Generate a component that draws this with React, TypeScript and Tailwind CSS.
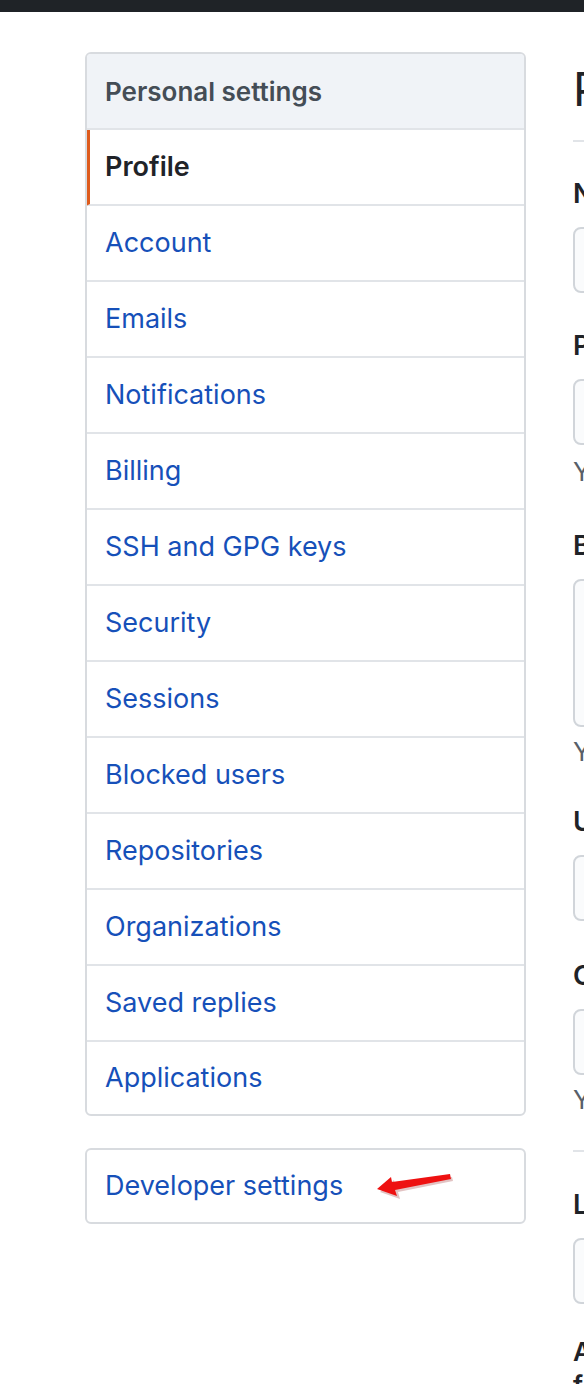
const items = [
  "Account",
  "Emails",
  "Notifications",
  "Billing",
  "SSH and GPG keys",
  "Security",
  "Sessions",
  "Blocked users",
  "Repositories",
  "Organizations",
  "Saved replies",
  "Applications",
];

function Arrow() {
  return (
    <svg
      className="absolute left-[282px] top-[14px]"
      width="90"
      height="40"
      viewBox="0 0 90 40"
    >
      <polygon
        points="10,26 24,14 25,19 82,11 83,15 28,26 30,33"
        fill="#8a1010"
        opacity="0.25"
        transform="translate(1,2)"
      />
      <polygon points="8,25 22,13 23,18 81,10 82,15 26,26 28,32" fill="#ee1111" />
    </svg>
  );
}

function Sidebar() {
  return (
    <div className="w-[441px] shrink-0">
      <nav className="rounded-[6px] border-2 border-[#d8dbdf] overflow-hidden">
        <div className="h-[76px] flex items-center pl-[18px] bg-[#f0f3f7] border-b-2 border-[#e1e4e8] text-[26px] font-semibold text-[#444d56]">
          Personal settings
        </div>
        <div className="h-[76px] flex items-center -ml-px pl-[15px] border-l-4 border-[#de5b1c] border-b-2 border-b-[#e1e4e8] text-[27px] font-semibold text-[#1f2328]">
          Profile
        </div>
        {items.map((it, i) => (
          <div
            key={it}
            className={`flex items-center pl-[18px] text-[27px] text-[#1650b9] ${
              i < items.length - 1 ? "h-[76px] border-b-2 border-[#e1e4e8]" : "h-[72px]"
            }`}
          >
            {it}
          </div>
        ))}
      </nav>
      <div className="relative mt-[32px] h-[76px] rounded-[6px] border-2 border-[#d8dbdf] flex items-center pl-[18px] text-[27px] text-[#1650b9]">
        Developer settings
        <Arrow />
      </div>
    </div>
  );
}

function Input({ h = "h-[66px]" }: { h?: string }) {
  return <div className={`${h} w-[640px] rounded-[8px] border-2 border-[#d1d5da] bg-[#fafbfc]`} />;
}

function Label({ children, mt }: { children: string; mt: string }) {
  return (
    <div className={`${mt} h-[34px] leading-[34px] text-[27px] font-semibold text-[#1f2328] mb-[16px]`}>
      {children}
    </div>
  );
}

function Note({ children, mt }: { children: string; mt: string }) {
  return (
    <div className={`${mt} h-[28px] leading-[28px] text-[26px] text-[#586069] whitespace-nowrap`}>
      {children}
    </div>
  );
}

function Main() {
  return (
    <div className="w-[700px] shrink-0 pt-[13px]">
      <h2 className="h-[48px] leading-[48px] text-[46px] text-[#1f2328] whitespace-nowrap">Public profile</h2>
      <div className="mt-[27px] border-t-2 border-[#e1e4e8]" />
      <Label mt="mt-[35px]">Name</Label>
      <Input />
      <Label mt="mt-[36px]">Public email</Label>
      <Input />
      <Note mt="mt-[13px]">You can manage verified email addresses in your email settings.</Note>
      <Label mt="mt-[43px]">Bio</Label>
      <Input h="h-[148px]" />
      <Note mt="mt-[11px]">You can @mention other users and organizations to link to them.</Note>
      <Label mt="mt-[39px]">URL</Label>
      <Input />
      <Label mt="mt-[38px]">Company</Label>
      <Input />
      <Note mt="mt-[11px]">You can @mention your company's GitHub organization to link it.</Note>
      <div className="mt-[36px] border-t-2 border-[#e1e4e8]" />
      <Label mt="mt-[36px]">Location</Label>
      <Input />
      <p className="mt-[31px] text-[26px] leading-[34px] text-[#1f2328] font-semibold whitespace-nowrap">
        All of the fields on this page are optional and can be deleted at any time, and by
        <br />
        filling them out, you're giving us consent to share this data.
      </p>
    </div>
  );
}

export default function App() {
  return (
    <div className="w-full min-h-[1384px] overflow-hidden bg-white font-['Inter',sans-serif]">
      <div className="h-[12px] bg-[#1f2327]" />
      <div className="flex gap-[47px] pl-[85px] pt-[40px]">
        <Sidebar />
        <Main />
      </div>
    </div>
  );
}
